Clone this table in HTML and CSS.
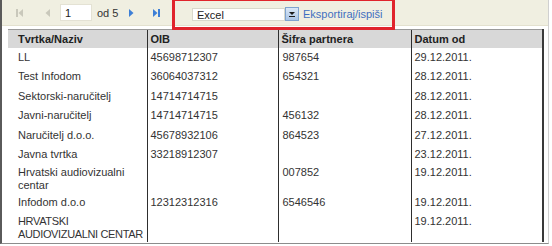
FILE: index.html
```html
<!DOCTYPE html>
<html lang="hr">
<head>
<meta charset="utf-8">
<title>Partneri</title>
<link rel="stylesheet" href="styles.css">
</head>
<body>
<div class="frame">
  <div class="toolbar">
    <div class="pager">
      <span class="pg-btn">
        <svg width="8" height="8" viewBox="0 0 8 8"><rect x="0" y="0" width="2" height="8" fill="#c9c8bb"/><path d="M7 0 L2.5 4 L7 8 Z" fill="#c9c8bb"/></svg>
      </span>
      <span class="pg-btn prev">
        <svg width="6" height="8" viewBox="0 0 6 8"><path d="M5 0 L0.5 4 L5 8 Z" fill="#c9c8bb"/></svg>
      </span>
      <input class="pg-input" type="text" value="1">
      <span class="pg-of">od 5</span>
      <span class="pg-btn next">
        <svg width="6" height="8" viewBox="0 0 6 8"><path d="M1 0 L5.5 4 L1 8 Z" fill="#3d7fd6"/></svg>
      </span>
      <span class="pg-btn last">
        <svg width="8" height="8" viewBox="0 0 8 8"><path d="M1 0 L5.5 4 L1 8 Z" fill="#3d7fd6"/><rect x="6" y="0" width="2" height="8" fill="#3d7fd6"/></svg>
      </span>
    </div>
    <div class="export">
      <div class="combo">
        <span class="combo-text">Excel</span>
        <span class="combo-btn">
          <svg width="8" height="6" viewBox="0 0 8 6"><path d="M1 1 L7 1 L4 4 Z" fill="#1b1b1b"/><rect x="1" y="5" width="6" height="1" fill="#1b1b1b"/></svg>
        </span>
      </div>
      <a class="export-link" href="#">Eksportiraj/ispiši</a>
    </div>
    <div class="highlight"></div>
  </div>

  <table class="grid">
    <colgroup>
      <col class="c-name"><col class="c-oib"><col class="c-code"><col class="c-date">
    </colgroup>
    <thead>
      <tr><th>Tvrtka/Naziv</th><th>OIB</th><th>Šifra partnera</th><th>Datum od</th></tr>
    </thead>
    <tbody>
      <tr><td>LL</td><td>45698712307</td><td>987654</td><td>29.12.2011.</td></tr>
      <tr><td>Test Infodom</td><td>36064037312</td><td>654321</td><td>28.12.2011.</td></tr>
      <tr><td>Sektorski-naručitelj</td><td>14714714715</td><td></td><td>28.12.2011.</td></tr>
      <tr><td>Javni-naručitelj</td><td>14714714715</td><td>456132</td><td>28.12.2011.</td></tr>
      <tr><td>Naručitelj d.o.o.</td><td>45678932106</td><td>864523</td><td>27.12.2011.</td></tr>
      <tr><td>Javna tvrtka</td><td>33218912307</td><td></td><td>23.12.2011.</td></tr>
      <tr class="tall"><td>Hrvatski audiovizualni<br>centar</td><td></td><td>007852</td><td>19.12.2011.</td></tr>
      <tr><td>Infodom d.o.o</td><td>12312312316</td><td>6546546</td><td>19.12.2011.</td></tr>
      <tr class="tall"><td class="tight">HRVATSKI<br>AUDIOVIZUALNI CENTAR</td><td></td><td></td><td>19.12.2011.</td></tr>
    </tbody>
  </table>
</div>
</body>
</html>
```

FILE: styles.css
```css
html, body {
  margin: 0;
  padding: 0;
  background: #ffffff;
}

body {
  font-family: "Liberation Sans", Arial, sans-serif;
  font-size: 11px;
  color: #2b2b2b;
}

.frame {
  position: relative;
  width: 546px;
  height: 243px;
  overflow: hidden;
  border-left: 2px solid #5a5a5a;
  border-right: 1px solid #d0d0d0;
  border-bottom: 1px solid #8c8c8c;
  background: #ffffff;
}

/* toolbar with pager and export controls */
.toolbar {
  position: relative;
  display: flex;
  align-items: center;
  height: 25px;
  background: #f0efe1;
  border-bottom: 1px solid #e3e1cf;
}

.pager {
  display: flex;
  align-items: center;
  padding-left: 12px;
  width: 178px;
}

.pg-btn {
  display: flex;
  align-items: center;
  justify-content: center;
  width: 12px;
  height: 12px;
}

.pg-btn.prev { margin-left: 16px; }
.pg-btn.next { margin-left: 7px; }
.pg-btn.last { margin-left: 13px; }

.pg-input {
  box-sizing: border-box;
  width: 32px;
  height: 17px;
  margin: 0 0 0 6px;
  padding: 0 4px;
  border: 1px solid #e4e2d4;
  border-radius: 0;
  background: #ffffff;
  font-family: inherit;
  font-size: 11px;
  color: #222;
  outline: none;
}

.pg-of {
  margin-left: 5px;
  color: #333;
}

.export {
  display: flex;
  align-items: center;
  padding-top: 3px;
}

.combo {
  display: flex;
  height: 13px;
}

.combo-text {
  box-sizing: border-box;
  width: 93px;
  height: 13px;
  padding-left: 4px;
  line-height: 12px;
  background: #ffffff;
  border: 1px solid #d9d8cc;
  color: #222;
}

.combo-btn {
  box-sizing: border-box;
  display: flex;
  align-items: center;
  justify-content: center;
  width: 14px;
  height: 14px;
  margin-top: -1px;
  border: 1px solid #7fa3cf;
  background: linear-gradient(#dbe8f7, #a9c4e6);
}

.export-link {
  margin-left: 4px;
  color: #3f6fc0;
  text-decoration: none;
}

/* red marker around the export controls */
.highlight {
  position: absolute;
  left: 170px;
  top: -2px;
  width: 217px;
  height: 26px;
  border: 3px solid #e0242c;
  pointer-events: none;
}

/* data grid */
.grid {
  margin: 3px 0 0 6px;
  width: 535px;
  table-layout: fixed;
  border-collapse: collapse;
}

.c-name { width: 139px; }
.c-oib { width: 131px; }
.c-code { width: 133px; }
.c-date { width: 132px; }

.grid th {
  height: 17px;
  padding: 1px 3px 0;
  text-align: left;
  font-weight: bold;
  line-height: 15px;
  color: #222;
  background: #d8d8d8;
  border-top: 1px solid #9a9a9a;
}

.grid td {
  padding: 3px 3px 3px;
  line-height: 13.4px;
  vertical-align: top;
  color: #333;
}

.grid tr.tall td {
  padding: 2px 3px 1px;
  line-height: 13px;
}

.grid th:first-child,
.grid td:first-child,
.grid tr.tall td:first-child {
  padding-left: 10px;
}

.grid td.tight {
  white-space: nowrap;
  letter-spacing: -0.35px;
}

.grid th + th,
.grid td + td {
  border-left: 1px solid #2e2e2e;
}

.grid th:last-child,
.grid td:last-child {
  border-right: 2px solid #3a3a3a;
}

.grid td:nth-child(3),
.grid tr.tall td:nth-child(3) {
  padding-left: 4px;
}
```
